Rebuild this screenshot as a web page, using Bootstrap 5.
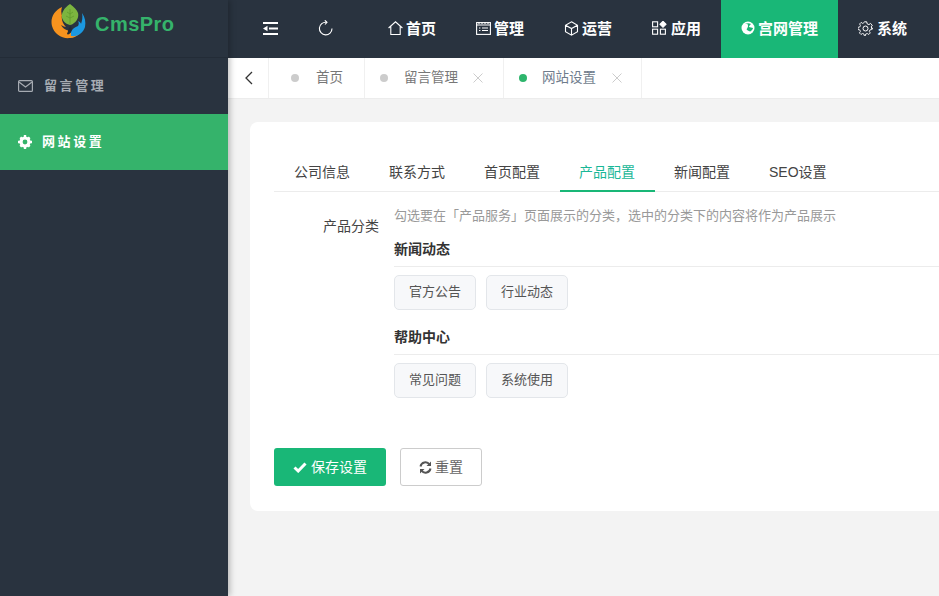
<!DOCTYPE html>
<html lang="zh-CN">
<head>
<meta charset="utf-8">
<title>网站设置</title>
<link rel="stylesheet" href="https://cdn.jsdelivr.net/npm/bootstrap@5.3.0/dist/css/bootstrap.min.css">
<style>
html,body{height:100%;overflow:hidden}
body{font-family:"Liberation Sans","Noto Sans CJK SC",sans-serif;font-size:14px;color:#333;background:#f3f3f3;width:939px;height:596px}
.shell{height:596px;width:939px}
.sidenav{width:228px;background:#29333f;flex:none;box-shadow:2px 0 6px rgba(0,0,0,.25);z-index:2}
.brandbox{height:58px;border-bottom:1px solid #232c37;padding:3px 0 0 51px;gap:9px}
.brandname{font-family:"Liberation Sans",sans-serif;font-weight:700;font-size:20px;color:#35b36b;letter-spacing:.45px;line-height:1;margin-top:11px}
.sideitem{height:56px;color:#a6abb2;font-size:13px;letter-spacing:2.6px;padding-left:18px;font-weight:700}
.sideitem svg{flex:none}
.sideitem.on{background:#35b36b;color:#fff}
.gapmail{gap:11px}
.gapgear{gap:10px}
.mainpane{min-width:0}
.topbar{height:58px;background:#29333f;flex:none}
.toolzone{width:140px;padding:0 0 2px 35px;gap:40px}
.topitem{height:58px;padding:0 20px 2px;gap:3px;color:#fff;font-size:15px;font-weight:700;line-height:1}
.topitem.on{background:#19b777}
.tabstrip{height:41px;background:#fff;border-bottom:1px solid #ececec;flex:none}
.tabback{width:41px;border-right:1px solid #f0f0f0}
.tabcell{padding:0 21px 0 22px;color:#777;font-size:13.5px;border-right:1px solid #f0f0f0}
.tabcell.closable{padding:0 20px 0 15px}
.tabcell.closable.act{padding-right:19px}
.tabdot{width:8px;height:8px;border-radius:50%;background:#ccc;margin-right:17px}
.closable .tabdot{margin-right:16px}
.closable.act .tabdot{margin-right:15px}
.tabdot.live{background:#2db56c}
.tabcell.act{color:#6f7c8c}
.tabx{margin-left:15px;display:inline-flex}
.act .tabx{margin-left:16px}
.pagezone{padding:23px 0 0 22px;min-height:0}
.panelbox{background:#fff;border-radius:8px 0 0 8px;height:389px;padding:31px 0 0 24px}
.tabline{border-bottom:1px solid #ececec;height:39px;padding-left:.5px}
.tabpick{padding:0 19.5px;height:39px;line-height:38px;font-size:14px;color:#444}
.tabpick.on{color:#19b797;border-bottom:2px solid #19b777}
.fieldrow{margin-top:13px}
.fieldname{width:105px;flex:none;text-align:right;font-size:14px;color:#444;padding-top:11px;line-height:20px}
.fieldbody{margin-left:15px;flex:1;min-width:0}
.hinttext{font-size:13px;color:#999;line-height:22px;height:22px}
.grouphead{font-size:14px;font-weight:700;color:#333;line-height:20px;padding-top:5px;border-bottom:1px solid #ececec;margin-top:7px;box-sizing:content-box;height:27px}
.grouphead.later{margin-top:12px}
.chiprow{gap:10px;margin-top:8px}
.chipbox{width:82px;height:35px;border:1px solid #e3e6ea;background:#f7f8fa;border-radius:5px;font-size:13px;color:#555;text-align:center;line-height:31px}
.actionrow{gap:14px;margin-top:50px}
.savebtn{width:112px;height:38px;background:#19b777;border:0;border-radius:3px;color:#fff;font-size:14px;padding:0;gap:4px}
.resetbtn{width:82px;height:38px;background:#fff;border:1px solid #ccc;border-radius:3px;color:#666;font-size:14px;padding:0;gap:3px}
</style>
</head>
<body>
<div class="shell d-flex">
  <aside class="sidenav d-flex flex-column">
    <div class="brandbox d-flex align-items-start">
      <svg width="35" height="36" viewBox="0 0 35 36">
        <path d="M11 4C3 8-1 15 1 23c2 8 10 13 18 12 4 0 7-2 9-4-4 1-8 0-10-3-2-1-6-2-8-6 2 1 4 2 5 2-3-3-5-7-4-12 1 3 3 6 6 8C11 16 9 10 11 4z" fill="#f7931e"/>
        <path d="M20 29c1-3 4-5 7-6 1-2 1-3 0-5 2 1 3 2 3 3 1-3 2-7 1-11 3 4 4 9 3 14-2 6-7 10-14 9z" fill="#1b98e0"/>
        <path d="M19 1c-6 4-9 9-8 14 1 3 3 5 5 6l3 1c1 0 3-1 4-2 3-2 5-6 4-10-1-3-4-6-8-9z" fill="#7cb53f"/>
        <path d="M19 6v15M19 11l-3-2M19 11l3-2M19 15l-4-2M19 15l4-2" stroke="#5f9a2c" stroke-width=".8" fill="none"/>
        <path d="M19 23c2 1 2 4 1 6-1 2-3 3-4 2 0-1 1-2 1-3s1-3 2-5z" fill="#232a33"/>
      </svg>
      <span class="brandname">CmsPro</span>
    </div>
    <div class="sideitem gapmail d-flex align-items-center">
      <svg width="15" height="12" viewBox="0 0 15 12" fill="none" stroke="#a6abb2" stroke-width="1.2"><rect x=".6" y=".6" width="13.8" height="10.8" rx="1"/><path d="M1 2l6.500 5L14 2"/></svg>
      <span>留言管理</span>
    </div>
    <div class="sideitem gapgear on d-flex align-items-center">
      <svg width="14" height="14" viewBox="0 0 14 14"><circle cx="7" cy="7" r="4" fill="none" stroke="#fff" stroke-width="3.2"/><path d="M5.800 0h2.400v2.400H5.800zM5.800 11.600h2.400V14H5.800zM0 5.800h2.400v2.400H0zM11.600 5.800H14v2.400h-2.400zM1.500 3.200l1.700-1.700 1.700 1.700-1.700 1.700zM9.100 10.800l1.700-1.700 1.700 1.700-1.700 1.700zM9.100 3.200l1.700-1.700 1.700 1.700-1.700 1.700zM1.500 10.800l1.700-1.700 1.700 1.700-1.700 1.700z" fill="#fff"/></svg>
      <span>网站设置</span>
    </div>
  </aside>
  <div class="mainpane flex-grow-1 d-flex flex-column">
    <header class="topbar d-flex">
      <div class="toolzone d-flex align-items-center">
        <svg width="15" height="13" viewBox="0 0 15 13" fill="#fff"><path d="M0 0h15v2H0zM6 5.500h9v2H6zM0 11h15v2H0zM0 6.500l4.500-2.700v5.400z"/></svg>
        <svg width="15" height="16" viewBox="0 0 15 16" fill="none" stroke="#fff" stroke-width="1.100"><path d="M8.500 2.300A6.300 6.300 0 1 0 14 8.500"/><path d="M6.800.3l2.200 2-2 2.200"/></svg>
      </div>
      <div class="topitem d-flex align-items-center">
        <svg width="15" height="14" viewBox="0 0 15 14" fill="none" stroke="#fff" stroke-width="1.100"><path d="M.6 7L7.500.8 14.400 7M2.800 5.500v8h9.400v-8"/></svg><span>首页</span>
      </div>
      <div class="topitem d-flex align-items-center">
        <svg width="15" height="14" viewBox="0 0 15 14" fill="none" stroke="#fff" stroke-width="1.100"><rect x=".6" y="1.600" width="13.800" height="11.800"/><path d="M.6 4h13.800M3 1V3M6 1V3M9 1V3M12 1V3M6 7h6M6 9.500h6M3 7h1.400M3 9.500h1.400"/></svg><span>管理</span>
      </div>
      <div class="topitem d-flex align-items-center">
        <svg width="15" height="15" viewBox="0 0 15 15" fill="none" stroke="#fff" stroke-width="1.100"><path d="M7.500.8l6 3.400v6.600l-6 3.400-6-3.400V4.200zM1.500 4.200l6 3.400 6-3.400M7.500 7.600v6.600"/></svg><span>运营</span>
      </div>
      <div class="topitem d-flex align-items-center">
        <svg width="16" height="14" viewBox="0 0 16 14" fill="none" stroke="#fff" stroke-width="1.100"><rect x=".6" y=".8" width="5" height="5"/><rect x=".6" y="8.200" width="5" height="5"/><rect x="8.400" y="8.200" width="5" height="5"/><path d="M11 .3l3 3-3 3-3-3z" fill="#fff"/></svg><span>应用</span>
      </div>
      <div class="topitem on d-flex align-items-center">
        <svg width="14" height="14" viewBox="0 0 14 14"><circle cx="7" cy="7" r="6.500" fill="#fff"/><path d="M4 3c2-1 3 0 3 2s-2 3-1 4c2 1 3 2 4 1 1-1 2-2 2-3-1 0-3-1-4-1 0-1 1-2 2-3-2-1-4-1-6 0z" fill="#19b777"/></svg><span>宫网管理</span>
      </div>
      <div class="topitem d-flex align-items-center" style="gap:4px">
        <svg width="15" height="15" viewBox="0 0 15 15" fill="none" stroke="#fff" stroke-width="1"><circle cx="7.500" cy="7.500" r="2.500"/><path d="M6.300.8h2.400l.4 2 1.800.8 1.700-1.100 1.700 1.700-1.100 1.700.7 1.700 2 .4"/><path d="M14.500 6.300v2.400l-2 .4-.7 1.700 1.100 1.700-1.700 1.700-1.700-1.100-1.800.7-.4 2H6.300l-.4-2-1.700-.7-1.700 1.100-1.700-1.700 1.100-1.700-.7-1.700-2-.4V6.300l2-.4.700-1.700L1 2.500 2.700.8l1.700 1.100 1.900-1.100" transform="translate(.7 .7) scale(.9)"/></svg><span>系统</span>
      </div>
    </header>
    <nav class="tabstrip d-flex">
      <div class="tabback d-flex align-items-center justify-content-center">
        <svg width="9" height="14" viewBox="0 0 9 14" fill="none" stroke="#333" stroke-width="1.300"><path d="M8 1L2 7l6 6"/></svg>
      </div>
      <div class="tabcell d-flex align-items-center"><span class="tabdot"></span><span>首页</span></div>
      <div class="tabcell closable d-flex align-items-center"><span class="tabdot"></span><span>留言管理</span><span class="tabx"><svg width="10" height="10" viewBox="0 0 10 10" stroke="#ccc" stroke-width="1"><path d="M.5.5l9 9M9.500.5l-9 9"/></svg></span></div>
      <div class="tabcell closable act d-flex align-items-center"><span class="tabdot live"></span><span>网站设置</span><span class="tabx"><svg width="10" height="10" viewBox="0 0 10 10" stroke="#ccc" stroke-width="1"><path d="M.5.5l9 9M9.500.5l-9 9"/></svg></span></div>
    </nav>
    <main class="pagezone flex-grow-1">
      <section class="panelbox">
        <div class="tabline d-flex">
          <div class="tabpick">公司信息</div>
          <div class="tabpick">联系方式</div>
          <div class="tabpick">首页配置</div>
          <div class="tabpick on">产品配置</div>
          <div class="tabpick">新闻配置</div>
          <div class="tabpick">SEO设置</div>
        </div>
        <div class="fieldrow d-flex">
          <div class="fieldname">产品分类</div>
          <div class="fieldbody">
            <div class="hinttext">勾选要在「产品服务」页面展示的分类，选中的分类下的内容将作为产品展示</div>
            <div class="grouphead">新闻动态</div>
            <div class="chiprow d-flex"><div class="chipbox">官方公告</div><div class="chipbox">行业动态</div></div>
            <div class="grouphead later">帮助中心</div>
            <div class="chiprow d-flex"><div class="chipbox">常见问题</div><div class="chipbox">系统使用</div></div>
          </div>
        </div>
        <div class="actionrow d-flex">
          <button type="button" class="btn savebtn d-flex align-items-center justify-content-center">
            <svg width="14" height="11" viewBox="0 0 14 11" fill="none" stroke="#fff" stroke-width="3"><path d="M1.500 5.500l3.700 3.500 7.300-7.500"/></svg><span>保存设置</span>
          </button>
          <button type="button" class="btn resetbtn d-flex align-items-center justify-content-center">
            <svg width="13" height="13" viewBox="0 0 13 13" fill="none" stroke="#555" stroke-width="2"><path d="M1.500 5.500A5 5 0 0 1 10.500 3.500M11.500 7.500A5 5 0 0 1 2.500 9.500"/><path d="M12 .5V5H7.500zM1 12.500V8h4.500z" fill="#555" stroke="none"/></svg><span>重置</span>
          </button>
        </div>
      </section>
    </main>
  </div>
</div>
<script src="https://cdn.jsdelivr.net/npm/bootstrap@5.3.0/dist/js/bootstrap.bundle.min.js"></script>
</body>
</html>
